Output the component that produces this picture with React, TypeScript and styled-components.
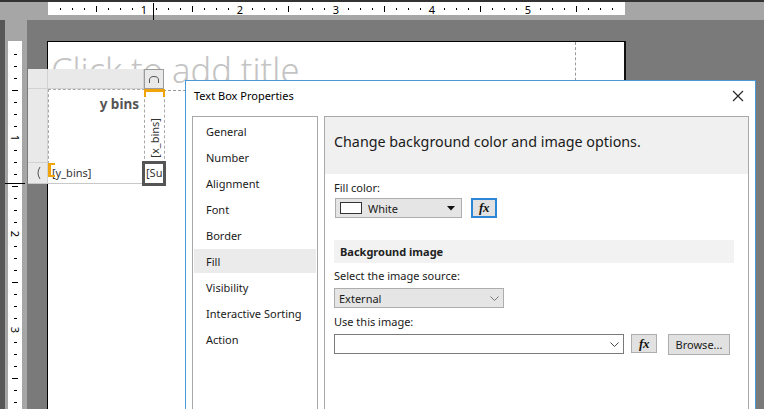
import React from "react";
import styled, { createGlobalStyle } from "styled-components";

const Global = createGlobalStyle`
  html, body { margin: 0; padding: 0; background: #7a7a7a; }
  body { font-family: "Noto Sans", "Open Sans", sans-serif; }
  #root { width: 764px; height: 409px; overflow: hidden; }
`;

const UI_FONT = `"Noto Sans", "Open Sans", sans-serif`;

const Shell = styled.div`
  position: relative;
  width: 764px;
  height: 409px;
  overflow: hidden;
  display: flex;
  flex-direction: column;
  background: #7a7a7a;
`;

const TopEdge = styled.div`
  flex: none;
  height: 2px;
  background: #333;
`;

const RulerRow = styled.div`
  flex: none;
  display: flex;
  height: 18px;
  background: #a6a6a6;
`;

const RulerCorner = styled.div`
  flex: none;
  width: 48px;
`;

const Main = styled.div`
  flex: 1;
  display: flex;
  min-height: 0;
`;

const LeftStrip = styled.div`
  flex: none;
  width: 27px;
  display: flex;
  background: #a6a6a6;
`;

const DarkEdge = styled.div`
  flex: none;
  width: 5px;
  background: #575757;
`;

const VRulerSlot = styled.div`
  flex: none;
  width: 14px;
  margin: 21px 5px 0 3px;
  background: #fff;
`;

const Canvas = styled.div`
  flex: 1;
  display: flex;
  padding: 21px 0 0 20px;
  min-width: 0;
`;

const Page = styled.div`
  position: relative;
  flex: none;
  width: 576px;
  height: 400px;
  background: #fff;
  border-left: 1px solid #000;
  border-top: 1px solid #000;
  border-right: 2px solid #111;
`;

const TitleBox = styled.div`
  position: absolute;
  left: 0;
  top: 0;
  width: 528px;
  height: 49px;
  border-right: 1px dashed #9a9a9a;
  border-bottom: 1px dashed #9a9a9a;
  padding: 8px 0 0 3px;
  box-sizing: border-box;
  font-family: ${UI_FONT};
  font-weight: 300;
  font-size: 34.5px;
  line-height: 40px;
  color: #c4c4c4;
  white-space: nowrap;
  overflow: visible;
`;

/* ---------- Tablix ---------- */

const Tablix = styled.div`
  position: absolute;
  left: -20px;
  top: 27px;
  display: grid;
  grid-template-columns: 20px 96px 20px;
  grid-template-rows: 20px 74px 21px;
  font-family: ${UI_FONT};
`;

const Handle = styled.div<{ $strong?: boolean }>`
  background: #e9e9e9;
  border-right: 1px solid #d2d2d2;
  border-bottom: 1px solid #d2d2d2;
  box-sizing: border-box;
  display: flex;
  align-items: center;
  justify-content: center;
  ${(p) => (p.$strong ? "border: 1px solid #9c9c9c;" : "")}
`;

const RowHandleLast = styled(Handle)`
  border-bottom: 1px solid #c8c8c8;
`;

const BodyCell = styled.div`
  position: relative;
  background: #fff;
  border: 1px dashed #a8a8a8;
  margin: 0 -1px -1px 0;
  box-sizing: border-box;
  font-size: 11px;
  color: #333;
  overflow: visible;
`;

const YBinsHeader = styled(BodyCell)`
  text-align: right;
  padding: 5px 5px 0 0;
  font-weight: 700;
  font-size: 13.5px;
  color: #555;
`;

const XBinsCell = styled(BodyCell)`
  display: flex;
  align-items: flex-end;
  justify-content: center;
  padding-bottom: 5px;
  &::before {
    content: "";
    position: absolute;
    left: -1px;
    right: -1px;
    top: -1px;
    height: 5px;
    border: 3px solid #f0a30a;
    border-width: 3px 2px 0 2px;
  }
`;

const VerticalText = styled.span`
  writing-mode: vertical-rl;
  transform: rotate(180deg);
  font-size: 11px;
  color: #333;
  line-height: 12px;
`;

const RowCell = styled.div`
  position: relative;
  background: #fff;
  border-bottom: 1px solid #c8c8c8;
  box-sizing: border-box;
  font-size: 11px;
  color: #333;
  line-height: 19px;
  padding-left: 4px;
  white-space: nowrap;
  &::before {
    content: "";
    position: absolute;
    left: 0;
    top: 0;
    width: 4px;
    height: 10px;
    border: 2px solid #f0a30a;
    border-width: 2px 0 2px 3px;
  }
`;

const SelectedCell = styled.div`
  background: #fff;
  box-sizing: border-box;
  font-size: 11px;
  color: #333;
  line-height: 19px;
  padding-left: 2px;
  white-space: nowrap;
  overflow: hidden;
  outline: 3px solid #555;
  outline-offset: -1px;
  position: relative;
  z-index: 1;
`;

/* ---------- Dialog ---------- */

const Dialog = styled.div`
  position: absolute;
  left: 185px;
  top: 80px;
  width: 571px;
  height: 360px;
  box-sizing: border-box;
  background: #fff;
  border: 1px solid #4a9ad8;
  display: flex;
  flex-direction: column;
  font-family: ${UI_FONT};
  font-size: 11px;
  color: #000;
`;

const TitleBar = styled.div`
  flex: none;
  height: 35px;
  display: flex;
  align-items: flex-start;
  justify-content: space-between;
  padding: 7px 10px 0 8px;
  box-sizing: border-box;
  line-height: 16px;
`;

const CloseBtn = styled.div`
  width: 14px;
  height: 14px;
  margin-top: 1px;
  display: flex;
  align-items: center;
  justify-content: center;
`;

const DialogBody = styled.div`
  flex: 1;
  display: flex;
  gap: 6px;
  padding: 0 6px;
  min-height: 0;
`;

const NavPanel = styled.div`
  flex: none;
  width: 126px;
  box-sizing: border-box;
  border: 1px solid #a8a8a8;
  padding: 2px 1px;
  display: flex;
  flex-direction: column;
  gap: 2px;
`;

const NavItem = styled.div<{ $active?: boolean }>`
  height: 24px;
  line-height: 25px;
  padding-left: 12px;
  background: ${(p) => (p.$active ? "#ebebeb" : "transparent")};
  color: #1a1a1a;
  white-space: nowrap;
`;

const ContentPanel = styled.div`
  flex: 1;
  box-sizing: border-box;
  border: 1px solid #a8a8a8;
  display: flex;
  flex-direction: column;
`;

const ContentHeader = styled.div`
  flex: none;
  height: 57px;
  box-sizing: border-box;
  background: #f0f0f0;
  padding: 15px 0 0 9px;
  font-size: 14.3px;
  line-height: 20px;
  color: #1a1a1a;
`;

const ContentBody = styled.div`
  display: flex;
  flex-direction: column;
  padding: 6px 14px 0 9px;
`;

const Label = styled.div<{ $gap?: number }>`
  line-height: 16px;
  margin-top: ${(p) => p.$gap ?? 0}px;
  color: #1a1a1a;
`;

const Row = styled.div<{ $gap?: number }>`
  display: flex;
  align-items: flex-start;
  margin-top: ${(p) => p.$gap ?? 0}px;
`;

const ColorSelect = styled.div`
  width: 127px;
  height: 20px;
  margin-left: 1px;
  box-sizing: border-box;
  background: #e5e5e5;
  border: 1px solid #adadad;
  display: flex;
  align-items: center;
  padding: 0 6px 0 4px;
  gap: 6px;
`;

const Swatch = styled.div`
  width: 22px;
  height: 12px;
  box-sizing: border-box;
  background: #fff;
  border: 1px solid #333;
`;

const SelectText = styled.span`
  flex: 1;
  color: #1a1a1a;
`;

const FxButton = styled.div<{ $focused?: boolean; $ml?: number }>`
  width: 26px;
  height: ${(p) => (p.$focused ? 20 : 19)}px;
  margin-left: ${(p) => p.$ml ?? 0}px;
  box-sizing: border-box;
  background: #e1e1e1;
  border: ${(p) => (p.$focused ? "2px solid #2b86d5" : "1px solid #adadad")};
  display: flex;
  align-items: center;
  justify-content: center;
  font-family: "Liberation Serif", "DejaVu Serif", serif;
  font-style: italic;
  font-weight: 700;
  font-size: 13px;
  color: #111;
  letter-spacing: -0.5px;
`;

const SectionHeader = styled.div`
  height: 23px;
  margin-top: 22px;
  background: #f2f2f2;
  padding-left: 6px;
  line-height: 23px;
  font-weight: 700;
  color: #222;
`;

const SourceSelect = styled.div`
  width: 170px;
  height: 20px;
  box-sizing: border-box;
  background: #e5e5e5;
  border: 1px solid #adadad;
  display: flex;
  align-items: center;
  padding: 0 4px 0 4px;
`;

const ComboInput = styled.div`
  width: 290px;
  height: 20px;
  box-sizing: border-box;
  background: #fff;
  border: 1px solid #7a7a7a;
  display: flex;
  align-items: center;
  justify-content: flex-end;
  padding-right: 4px;
`;

const BrowseButton = styled.div`
  width: 62px;
  height: 21px;
  margin-left: 11px;
  box-sizing: border-box;
  background: #e1e1e1;
  border: 1px solid #adadad;
  display: flex;
  align-items: center;
  justify-content: center;
  color: #1a1a1a;
`;

/* ---------- Drawings ---------- */

const HRuler: React.FC = () => {
  const items: React.ReactNode[] = [];
  for (let i = 1; i * 12 < 576; i++) {
    const x = i * 12 + 0.5;
    if (i % 8 === 0) {
      items.push(
        <text key={i} x={i * 12} y={11.5} fontSize="11" textAnchor="middle" fill="#000" fontFamily={UI_FONT}>
          {i / 8}
        </text>
      );
    } else if (i % 4 === 0) {
      items.push(<line key={i} x1={x} x2={x} y1={4} y2={10} stroke="#000" strokeWidth={1} />);
    } else {
      items.push(<line key={i} x1={x} x2={x} y1={6} y2={8} stroke="#000" strokeWidth={1} />);
    }
  }
  return (
    <svg width="577" height="18" style={{ display: "block", flex: "none" }}>
      <rect x="0" y="0" width="577" height="13" fill="#fff" />
      {items}
      <line x1={105.5} x2={105.5} y1={1} y2={18} stroke="#000" strokeWidth={1} />
    </svg>
  );
};

const VRuler: React.FC = () => {
  const items: React.ReactNode[] = [];
  for (let i = 1; i * 12 <= 372; i++) {
    const y = i * 12 + 1.5;
    if (i % 8 === 0) {
      items.push(
        <text
          key={i}
          x={0}
          y={0}
          fontSize="11"
          textAnchor="middle"
          fill="#000"
          fontFamily={UI_FONT}
          transform={`translate(7 ${i * 12 + 1}) rotate(90) translate(0 4)`}
        >
          {i / 8}
        </text>
      );
    } else if (i % 4 === 0) {
      items.push(<line key={i} x1={4} x2={10} y1={y} y2={y} stroke="#000" strokeWidth={1} />);
    } else {
      items.push(<line key={i} x1={6} x2={9} y1={y} y2={y} stroke="#000" strokeWidth={1} />);
    }
  }
  return (
    <svg width="14" height="370" style={{ display: "block", overflow: "visible" }}>
      {items}
      <line x1={-3} x2={17} y1={142.5} y2={142.5} stroke="#000" strokeWidth={1} />
    </svg>
  );
};

const ArcGlyph = () => (
  <svg width="12" height="9" viewBox="0 0 12 9">
    <path d="M1.5 8 V5 Q1.5 1.5 6 1.5 Q10.5 1.5 10.5 5 V8" fill="none" stroke="#555" strokeWidth="1" />
  </svg>
);

const ParenGlyph = () => (
  <svg width="6" height="14" viewBox="0 0 6 14">
    <path d="M5 1 Q1 7 5 13" fill="none" stroke="#555" strokeWidth="1" />
  </svg>
);

const CloseIcon = () => (
  <svg width="12" height="12" viewBox="0 0 12 12">
    <path d="M1 1 L11 11 M11 1 L1 11" stroke="#222" strokeWidth="1.1" />
  </svg>
);

const Triangle = () => (
  <svg width="8" height="5" viewBox="0 0 8 5">
    <path d="M0 0 H8 L4 4.5 Z" fill="#111" />
  </svg>
);

const Chevron = ({ color = "#555" }: { color?: string }) => (
  <svg width="9" height="5" viewBox="0 0 9 5">
    <path d="M0.5 0.5 L4.5 4.5 L8.5 0.5" fill="none" stroke={color} strokeWidth="1" />
  </svg>
);

const navItems = [
  "General",
  "Number",
  "Alignment",
  "Font",
  "Border",
  "Fill",
  "Visibility",
  "Interactive Sorting",
  "Action",
];

export default function App() {
  return (
    <Shell>
      <Global />
      <TopEdge />
      <RulerRow>
        <RulerCorner />
        <HRuler />
      </RulerRow>
      <Main>
        <LeftStrip>
          <DarkEdge />
          <VRulerSlot>
            <VRuler />
          </VRulerSlot>
        </LeftStrip>
        <Canvas>
          <Page>
            <TitleBox>Click to add title</TitleBox>
            <Tablix>
              <Handle />
              <Handle />
              <Handle $strong>
                <ArcGlyph />
              </Handle>

              <Handle />
              <YBinsHeader>y bins</YBinsHeader>
              <XBinsCell>
                <VerticalText>[x_bins]</VerticalText>
              </XBinsCell>

              <RowHandleLast>
                <ParenGlyph />
              </RowHandleLast>
              <RowCell>[y_bins]</RowCell>
              <SelectedCell>[Su</SelectedCell>
            </Tablix>
          </Page>
        </Canvas>
      </Main>

      <Dialog>
        <TitleBar>
          <span>Text Box Properties</span>
          <CloseBtn>
            <CloseIcon />
          </CloseBtn>
        </TitleBar>
        <DialogBody>
          <NavPanel>
            {navItems.map((n) => (
              <NavItem key={n} $active={n === "Fill"}>
                {n}
              </NavItem>
            ))}
          </NavPanel>
          <ContentPanel>
            <ContentHeader>Change background color and image options.</ContentHeader>
            <ContentBody>
              <Label>Fill color:</Label>
              <Row $gap={2}>
                <ColorSelect>
                  <Swatch />
                  <SelectText>White</SelectText>
                  <Triangle />
                </ColorSelect>
                <FxButton $focused $ml={9}>
                  fx
                </FxButton>
              </Row>
              <SectionHeader>Background image</SectionHeader>
              <Label $gap={5}>Select the image source:</Label>
              <Row $gap={4}>
                <SourceSelect>
                  <SelectText>External</SelectText>
                  <Chevron color="#777" />
                </SourceSelect>
              </Row>
              <Label $gap={6}>Use this image:</Label>
              <Row $gap={4}>
                <ComboInput>
                  <Chevron color="#444" />
                </ComboInput>
                <FxButton $ml={7}>fx</FxButton>
                <BrowseButton>Browse...</BrowseButton>
              </Row>
            </ContentBody>
          </ContentPanel>
        </DialogBody>
      </Dialog>
    </Shell>
  );
}
